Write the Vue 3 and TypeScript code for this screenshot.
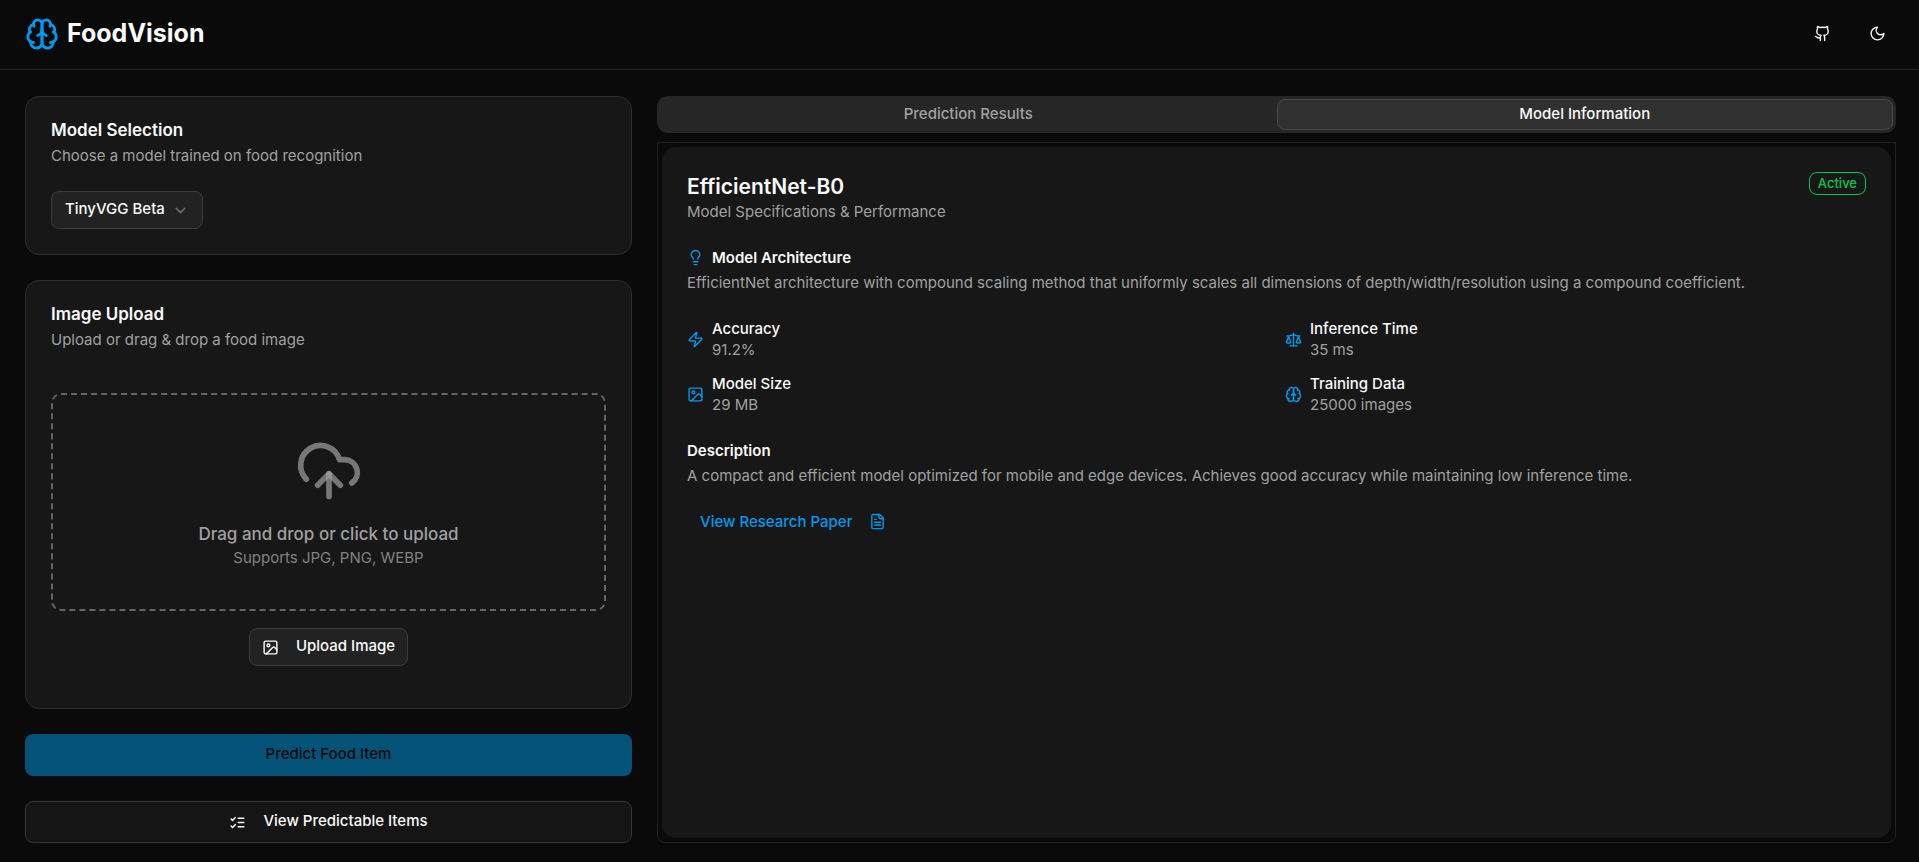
<script setup lang="ts">
import { ref } from 'vue'

type IconName = 'brain' | 'github' | 'moon' | 'chevron' | 'cloud' | 'image' | 'list' | 'bulb' | 'zap' | 'scale' | 'file'

const icons: Record<IconName, string[]> = {
  brain: [
    'M12 5a3 3 0 1 0-5.997.125 4 4 0 0 0-2.526 5.77 4 4 0 0 0 .556 6.588A4 4 0 1 0 12 18Z',
    'M12 5a3 3 0 1 1 5.997.125 4 4 0 0 1 2.526 5.77 4 4 0 0 1-.556 6.588A4 4 0 1 1 12 18Z',
    'M15 13a4.5 4.5 0 0 1-3-4 4.5 4.5 0 0 1-3 4',
    'M17.599 6.5a3 3 0 0 0 .399-1.375', 'M6.003 5.125A3 3 0 0 0 6.401 6.5',
    'M3.477 10.896a4 4 0 0 1 .585-.396', 'M19.938 10.5a4 4 0 0 1 .585.396',
    'M6 18a4 4 0 0 1-1.967-.516', 'M19.967 17.484A4 4 0 0 1 18 18',
  ],
  github: [
    'M15 22v-4a4.8 4.8 0 0 0-1-3.5c3 0 6-2 6-5.5.08-1.25-.27-2.48-1-3.5.28-1.15.28-2.35 0-3.5 0 0-1 0-3 1.5-2.64-.5-5.36-.5-8 0C6 2 5 2 5 2c-.3 1.15-.3 2.35 0 3.5A5.403 5.403 0 0 0 4 9c0 3.5 3 5.5 6 5.5-.39.49-.68 1.05-.85 1.65-.17.6-.22 1.23-.15 1.85v4',
    'M9 18c-4.51 2-5-2-7-2',
  ],
  moon: ['M12 3a6 6 0 0 0 9 9 9 9 0 1 1-9-9Z'],
  chevron: ['m6 9 6 6 6-6'],
  cloud: ['M12 13v8', 'M4 14.899A7 7 0 1 1 15.71 8h1.79a4.5 4.5 0 0 1 2.5 8.242', 'm8 17 4-4 4 4'],
  image: [
    'M5 3h14a2 2 0 0 1 2 2v14a2 2 0 0 1-2 2H5a2 2 0 0 1-2-2V5a2 2 0 0 1 2-2Z',
    'M11 9a2 2 0 1 1-4 0a2 2 0 0 1 4 0Z', 'm21 15-3.086-3.086a2 2 0 0 0-2.828 0L6 21',
  ],
  list: ['m3 17 2 2 4-4', 'm3 7 2 2 4-4', 'M13 6h8', 'M13 12h8', 'M13 18h8'],
  bulb: ['M15 14c.2-1 .7-1.7 1.5-2.5 1-.9 1.5-2.2 1.5-3.5A6 6 0 0 0 6 8c0 1 .2 2.2 1.5 3.5.7.7 1.3 1.5 1.5 2.5', 'M9 18h6', 'M10 22h4'],
  zap: ['M4 14a1 1 0 0 1-.78-1.63l9.9-10.2a.5.5 0 0 1 .86.46l-1.92 6.02A1 1 0 0 0 13 10h7a1 1 0 0 1 .78 1.63l-9.9 10.2a.5.5 0 0 1-.86-.46l1.92-6.02A1 1 0 0 0 11 14z'],
  scale: ['m16 16 3-8 3 8c-.87.65-1.92 1-3 1s-2.13-.35-3-1Z', 'm2 16 3-8 3 8c-.87.65-1.92 1-3 1s-2.13-.35-3-1Z', 'M7 21h10', 'M12 3v18', 'M3 7h2c2 0 5-1 7-2 2 1 5 2 7 2h2'],
  file: ['M15 2H6a2 2 0 0 0-2 2v16a2 2 0 0 0 2 2h12a2 2 0 0 0 2-2V7Z', 'M14 2v4a2 2 0 0 0 2 2h4', 'M10 9H8', 'M16 13H8', 'M16 17H8'],
}

const stats: { icon: IconName; label: string; value: string }[] = [
  { icon: 'zap', label: 'Accuracy', value: '91.2%' },
  { icon: 'scale', label: 'Inference Time', value: '35 ms' },
  { icon: 'image', label: 'Model Size', value: '29 MB' },
  { icon: 'brain', label: 'Training Data', value: '25000 images' },
]

const tabs = ['Prediction Results', 'Model Information']
const activeTab = ref(1)
const model = ref('TinyVGG Beta')
</script>

<template>
  <div class="app">
    <header class="topbar">
      <div class="brand">
        <svg class="icon logo" viewBox="0 0 24 24"><path v-for="d in icons.brain" :key="d" :d="d" /></svg>
        <h1>FoodVision</h1>
      </div>
      <nav class="actions">
        <a class="icon-button" href="#" aria-label="GitHub">
          <svg class="icon" viewBox="0 0 24 24"><path v-for="d in icons.github" :key="d" :d="d" /></svg>
        </a>
        <button class="icon-button" type="button" aria-label="Toggle theme">
          <svg class="icon" viewBox="0 0 24 24"><path v-for="d in icons.moon" :key="d" :d="d" /></svg>
        </button>
      </nav>
    </header>

    <main class="layout">
      <div class="side">
        <section class="card">
          <h2><label for="model">Model Selection</label></h2>
          <p class="muted">Choose a model trained on food recognition</p>
          <div class="select-wrap">
            <select id="model" v-model="model">
              <option>TinyVGG Beta</option>
            </select>
            <svg class="icon chevron" viewBox="0 0 24 24"><path v-for="d in icons.chevron" :key="d" :d="d" /></svg>
          </div>
        </section>

        <section class="card upload">
          <h2>Image Upload</h2>
          <p class="muted">Upload or drag &amp; drop a food image</p>
          <button class="dropzone" type="button">
            <svg class="icon cloud" viewBox="0 0 24 24"><path v-for="d in icons.cloud" :key="d" :d="d" /></svg>
            <span class="drop-title">Drag and drop or click to upload</span>
            <span class="drop-hint">Supports JPG, PNG, WEBP</span>
          </button>
          <button class="button upload-button" type="button">
            <svg class="icon" viewBox="0 0 24 24"><path v-for="d in icons.image" :key="d" :d="d" /></svg>
            <span class="button-label">Upload Image</span>
          </button>
        </section>

        <button class="button primary" type="button" disabled>
          <span class="button-label">Predict Food Item</span>
        </button>
        <button class="button wide" type="button">
          <svg class="icon" viewBox="0 0 24 24"><path v-for="d in icons.list" :key="d" :d="d" /></svg>
          <span class="button-label">View Predictable Items</span>
        </button>
      </div>

      <div class="content">
        <div class="tabs" role="tablist">
          <button
            v-for="(tab, i) in tabs"
            :key="tab"
            type="button"
            role="tab"
            class="tab"
            :class="{ active: activeTab === i }"
            :aria-selected="activeTab === i"
            @click="activeTab = i"
          >{{ tab }}</button>
        </div>
        <div class="panel">
          <article class="info">
            <div class="info-head">
              <div>
                <h2 class="model-name">EfficientNet-B0</h2>
                <p class="muted">Model Specifications &amp; Performance</p>
              </div>
              <span class="badge">Active</span>
            </div>
            <section>
              <h3 class="with-icon">
                <svg class="icon accent" viewBox="0 0 24 24"><path v-for="d in icons.bulb" :key="d" :d="d" /></svg>
                Model Architecture
              </h3>
              <p class="muted">EfficientNet architecture with compound scaling method that uniformly scales all dimensions of depth/width/resolution using a compound coefficient.</p>
            </section>
            <div class="stats">
              <div v-for="s in stats" :key="s.label" class="stat">
                <svg class="icon accent" viewBox="0 0 24 24"><path v-for="d in icons[s.icon]" :key="d" :d="d" /></svg>
                <div>
                  <p class="stat-label">{{ s.label }}</p>
                  <p class="stat-value">{{ s.value }}</p>
                </div>
              </div>
            </div>
            <section>
              <h3>Description</h3>
              <p class="muted">A compact and efficient model optimized for mobile and edge devices. Achieves good accuracy while maintaining low inference time.</p>
            </section>
            <a class="paper" href="#">
              View Research Paper
              <svg class="icon" viewBox="0 0 24 24"><path v-for="d in icons.file" :key="d" :d="d" /></svg>
            </a>
          </article>
        </div>
      </div>
    </main>
  </div>
</template>

<style>
body {
  background: #0a0a0a;
}
</style>

<style scoped>
.app,
.app * {
  box-sizing: border-box;
}
.app {
  min-height: 100vh;
  display: flex;
  flex-direction: column;
  background: #0a0a0a;
  color: #fafafa;
  font-family: Inter, "Liberation Sans", sans-serif;
  font-size: 15px;
  line-height: 21px;
}
h1, h2, h3, p {
  margin: 0;
}
button, select {
  font: inherit;
  color: inherit;
  cursor: pointer;
}
a {
  color: inherit;
  text-decoration: none;
}
.icon {
  width: 17px;
  height: 17px;
  flex: none;
  fill: none;
  stroke: currentColor;
  stroke-width: 2;
  stroke-linecap: round;
  stroke-linejoin: round;
}
.accent {
  color: #0099ee;
}
.muted {
  color: #a1a1a1;
}
.topbar {
  height: 70px;
  padding: 0 23px 2px 25px;
  display: flex;
  align-items: center;
  justify-content: space-between;
  border-bottom: 1px solid #262626;
}
.brand {
  display: flex;
  align-items: center;
  gap: 8px;
}
.logo {
  width: 34px;
  height: 34px;
  color: #0099ee;
}
h1 {
  padding-bottom: 2px;
  font-size: 25px;
  line-height: 32px;
  font-weight: 700;
}
.actions {
  display: flex;
  gap: 17px;
}
.icon-button {
  width: 38px;
  height: 38px;
  padding: 0;
  display: flex;
  align-items: center;
  justify-content: center;
  background: none;
  border: 0;
  border-radius: 8px;
}
.layout {
  flex: 1;
  padding: 26px 23px 19px 25px;
  display: grid;
  grid-template-columns: minmax(0, 1fr) minmax(0, 1fr) minmax(0, 1fr);
  gap: 25px;
}
.side {
  display: flex;
  flex-direction: column;
  gap: 25px;
}
.card {
  padding: 21px 25px 25px;
  background: #171717;
  border: 1px solid #2e2e2e;
  border-radius: 14px;
}
h2 {
  font-size: 17px;
  line-height: 25px;
  font-weight: 600;
}
.card h2 {
  margin-bottom: 2px;
}
.select-wrap {
  position: relative;
  width: max-content;
  margin-top: 25px;
}
select,
.upload-button {
  background: #222222;
  border: 1px solid #3c3c3c;
  border-radius: 8px;
}
select {
  height: 38px;
  padding: 0 37px 3px 13px;
  display: block;
  appearance: none;
  font-weight: 500;
}
.chevron {
  position: absolute;
  right: 14px;
  top: 11px;
  color: #6b6b6b;
  pointer-events: none;
}
.upload {
  flex: 1;
  display: flex;
  flex-direction: column;
}
.dropzone {
  flex: 1;
  margin-top: 43px;
  padding: 0;
  display: flex;
  flex-direction: column;
  align-items: center;
  justify-content: center;
  background: none;
  border: 2px dashed #656565;
  border-radius: 10px;
}
.cloud {
  width: 68px;
  height: 68px;
  margin-bottom: 17px;
  color: rgba(161, 161, 161, 0.7);
}
.drop-title {
  font-size: 17px;
  line-height: 25px;
  font-weight: 500;
  color: #a1a1a1;
}
.drop-hint {
  color: #828282;
}
.button {
  display: flex;
  align-items: center;
  justify-content: center;
  gap: 17px;
  padding: 0 12px;
  font-weight: 500;
  border-radius: 8px;
}
.button-label {
  padding-bottom: 3px;
}
.upload-button {
  height: 38px;
  align-self: center;
  margin: 17px 0;
}
.primary {
  height: 42px;
  background: #055279;
  border: 0;
  color: #0a0a0a;
}
.wide {
  height: 42px;
  background: #151515;
  border: 1px solid #363636;
}
.content {
  grid-column: span 2;
  display: flex;
  flex-direction: column;
  gap: 9px;
}
.tabs {
  height: 37px;
  padding: 3px;
  display: flex;
  background: #262626;
  border-radius: 11px;
}
.tab {
  flex: 1;
  padding: 0 8px 2px;
  background: none;
  border: 1px solid transparent;
  border-radius: 8px;
  font-weight: 500;
  color: #a1a1a1;
}
.tab.active {
  background: #303030;
  border-color: #4b4b4b;
  color: #fafafa;
}
.panel {
  flex: 1;
  padding: 4px;
  display: flex;
  border: 1px solid #212121;
  border-radius: 0 0 8px 8px;
}
.info {
  flex: 1;
  padding: 25px;
  background: #171717;
  border-radius: 14px;
}
.info-head {
  display: flex;
  justify-content: space-between;
  align-items: flex-start;
  margin-bottom: 25px;
}
.model-name {
  font-size: 21px;
  line-height: 29px;
}
.badge {
  height: 23px;
  padding: 0 8px;
  font-size: 13px;
  line-height: 20px;
  font-weight: 500;
  color: #00c950;
  border: 1px solid #00c950;
  border-radius: 8px;
}
h3 {
  font-size: 15px;
  line-height: 21px;
  font-weight: 600;
  margin-bottom: 4px;
}
.with-icon {
  display: flex;
  align-items: center;
  gap: 8px;
}
.stats {
  display: grid;
  grid-template-columns: 1fr 1fr;
  gap: 13px 17px;
  margin: 25px 0;
}
.stat {
  display: flex;
  align-items: center;
  gap: 8px;
}
.stat-label {
  font-weight: 500;
}
.stat-value {
  color: #a1a1a1;
}
.paper {
  width: max-content;
  height: 38px;
  margin-top: 16px;
  padding: 0 13px;
  display: flex;
  align-items: center;
  gap: 17px;
  font-weight: 500;
  color: #0099ee;
}
</style>
